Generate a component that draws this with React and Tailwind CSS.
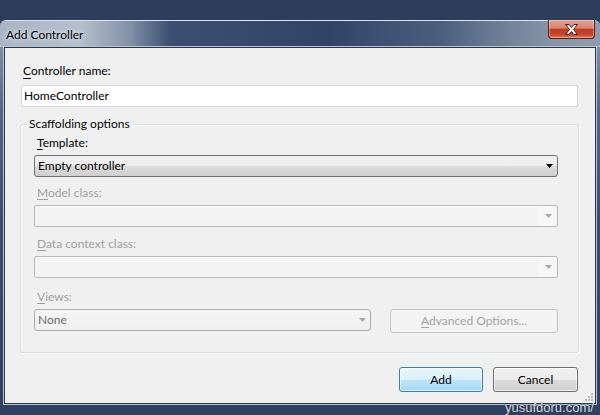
import React from "react";

const Arrow = ({ color = "#000" }) => (
  <svg width="7" height="4" viewBox="0 0 7 4">
    <polygon points="0,0 7,0 3.5,4" fill={color} />
  </svg>
);

function DisabledCombo() {
  return (
    <div className="mt-[4px] h-[22px] flex rounded-[2px] border border-[#b9b9b9] bg-[#f4f4f4] shadow-[inset_0_1px_0_#ffffff]">
      <div className="flex-1" />
      <div className="w-[18px] flex items-center justify-center bg-[#f7f7f7]">
        <Arrow color="#a8a8a8" />
      </div>
    </div>
  );
}

export default function App() {
  return (
    <div className="relative w-[600px] h-[415px] overflow-hidden bg-[#2d3e5c] flex flex-col font-['Lato',sans-serif] text-[12px] leading-[16px] text-black">
      <div className="h-[20px] shrink-0" />

      {/* window frame */}
      <div className="flex-1 flex flex-col rounded-t-[6px] border-t border-[#dde3eb] bg-[linear-gradient(180deg,#8f9cb0_0px,#54668a_90px,#3a4e70_200px,#2f4162_100%)]">
        {/* title bar */}
        <div className="h-[26px] shrink-0 flex justify-between bg-[linear-gradient(90deg,#aab5c5_0px,#b5bfcc_80px,#8391a8_130px,#3a4f71_170px,#2f4466_330px,#3c5173_380px,#4a5e7d_440px,#6f7e97_500px,#8a97aa_560px,#8f9bae_600px)] rounded-t-[6px] border-b border-[#c3ccd8]">
          <div className="pl-[6px] pt-[6px] text-[12px] [text-shadow:0_0_6px_#e6ebf2,0_0_3px_#e6ebf2]">
            Add Controller
          </div>
          <div className="-mt-[1px] mr-[5px] w-[47px] h-[19px] flex items-center justify-center rounded-b-[4px] border border-t-0 border-[#5c1e16] bg-[linear-gradient(180deg,#e3a08e_0%,#d88572_45%,#c13a20_52%,#c84428_80%,#e27a55_100%)] shadow-[inset_0_0_0_1px_rgba(255,255,255,0.35)]">
            <svg width="13" height="11" viewBox="0 0 13 11">
              <polygon
                points="0.5,0.5 4,0.5 6.5,3.5 9,0.5 12.5,0.5 8.5,5.5 12.5,10.5 9,10.5 6.5,7.5 4,10.5 0.5,10.5 4.5,5.5"
                fill="#ffffff"
                stroke="#4a1a12"
                strokeWidth="1"
                strokeLinejoin="round"
              />
            </svg>
          </div>
        </div>

        {/* client area */}
        <div className="relative mx-[4px] h-[357px] shrink-0 border border-[#29374d] shadow-[0_0_0_1px_#b9c4d2] bg-[#f0f0f0] pl-[16px] pr-[17px]">
          <div className="mt-[15px] pl-[2px]">
            <u className="no-underline border-b border-black">C</u>ontroller name:
          </div>
          <div className="mt-[6px] h-[22px] flex items-center bg-white border border-[#d3d8de] rounded-[2px] pl-[2px]">
            HomeController
          </div>

          <fieldset className="mt-[9px] -mx-[1px] border border-[#d5dfe5] rounded-[3px] shadow-[inset_1px_1px_0_#ffffff,1px_1px_0_#ffffff] pl-[13px] pr-[20px] pb-[19px]">
            <legend className="-ml-[7px] px-[2px] leading-[16px]">Scaffolding options</legend>

            <div className="mt-[3px] pl-[3px]">
              <span className="underline underline-offset-2">T</span>emplate:
            </div>
            <div className="mt-[4px] h-[22px] flex items-center justify-between rounded-[3px] border border-[#707070] bg-[linear-gradient(180deg,#f2f2f2_0%,#ebebeb_50%,#dddddd_50%,#cfcfcf_100%)] pl-[3px] pr-[4px]">
              <span>Empty controller</span>
              <Arrow />
            </div>

            <div className="mt-[8px] pl-[3px] text-[#a0a0a0]">
              <span className="underline underline-offset-2">M</span>odel class:
            </div>
            <DisabledCombo />

            <div className="mt-[9px] pl-[3px] text-[#a0a0a0]">
              <span className="underline underline-offset-2">D</span>ata context class:
            </div>
            <DisabledCombo />

            <div className="mt-[11px] pl-[3px] text-[#a0a0a0]">
              <span className="underline underline-offset-2">V</span>iews:
            </div>
            <div className="mt-[4px] h-[24px] flex items-start justify-between">
              <div className="w-[337px] h-[22px] flex items-center justify-between rounded-[3px] border border-[#adadad] bg-[linear-gradient(180deg,#f5f5f5_0%,#f0f0f0_100%)] pl-[3px] pr-[4px] text-[#6d6d6d]">
                <span>None</span>
                <Arrow color="#a8a8a8" />
              </div>
              <div className="w-[168px] h-[24px] flex items-center justify-center rounded-[3px] border border-[#c4c4c4] bg-[#f4f4f4] text-[#a3a3a3]">
                <span>
                  <span className="underline underline-offset-2">A</span>dvanced Options...
                </span>
              </div>
            </div>
          </fieldset>

          <div className="mt-[14px] flex justify-end gap-[10px]">
            <button className="w-[84px] h-[25px] rounded-[3px] border border-[#3c7fb1] bg-[linear-gradient(180deg,#eaf6fd_0%,#d9f0fc_50%,#bee6fd_50%,#a7d9f5_100%)] shadow-[inset_0_0_0_1px_rgba(255,255,255,0.6)]">
              Add
            </button>
            <button className="w-[85px] h-[25px] rounded-[3px] border border-[#707070] bg-[linear-gradient(180deg,#f2f2f2_0%,#ebebeb_50%,#dddddd_50%,#cfcfcf_100%)] shadow-[inset_0_0_0_1px_rgba(255,255,255,0.6)]">
              Cancel
            </button>
          </div>

          {/* size grip */}
          <svg className="absolute right-[2px] bottom-[2px]" width="8" height="8" viewBox="0 0 8 8">
            <rect x="6" y="0" width="2" height="2" fill="#b8b8b8" />
            <rect x="3" y="3" width="2" height="2" fill="#b8b8b8" />
            <rect x="6" y="3" width="2" height="2" fill="#b8b8b8" />
            <rect x="0" y="6" width="2" height="2" fill="#b8b8b8" />
            <rect x="3" y="6" width="2" height="2" fill="#b8b8b8" />
            <rect x="6" y="6" width="2" height="2" fill="#b8b8b8" />
          </svg>
        </div>
      </div>

      {/* watermark */}
      <div className="absolute left-[505px] top-[400px] font-['Liberation_Sans',sans-serif] text-[13px] leading-[15px] text-[#d8dde4] [text-shadow:0_0_2px_#1c2638] whitespace-nowrap">
        yusufdoru.com/
      </div>
    </div>
  );
}
